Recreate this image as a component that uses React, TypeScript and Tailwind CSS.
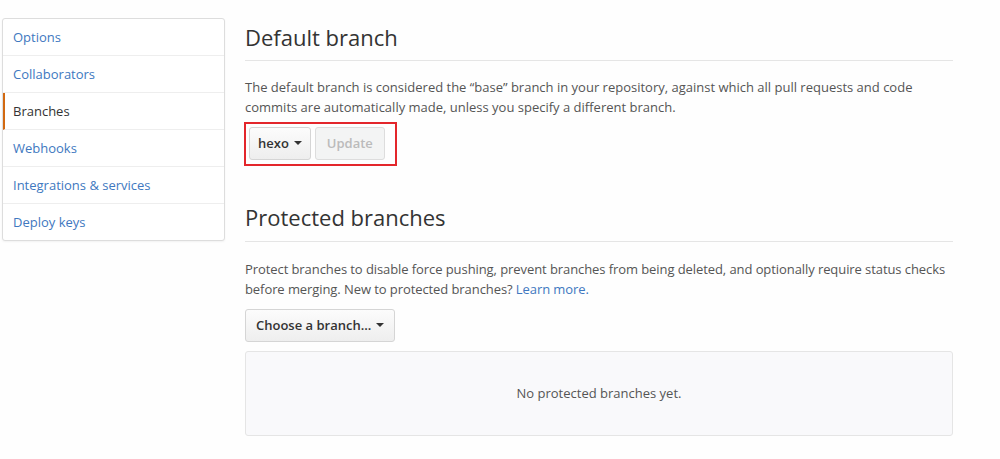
import React from 'react';

const menu = ['Options', 'Collaborators', 'Branches', 'Webhooks', 'Integrations & services', 'Deploy keys'];

function Caret() {
  return <span className="inline-block ml-[5px] align-middle border-x-[4px] border-x-transparent border-t-[4px] border-t-[#333] relative top-[-1px]" />;
}

export default function App() {
  return (
    <div className="min-h-[459px] w-[1000px] bg-[#fefefe] text-[#333] flex items-start" style={{ fontFamily: '"Open Sans", "Noto Sans", Arial, sans-serif' }}>
      {/* sidebar */}
      <nav className="ml-[2px] mt-[18px] w-[223px] bg-white border border-[#ddd] rounded-[3px] shadow-[0_1px_2px_rgba(0,0,0,0.05)]">
        {menu.map((m, i) => (
          <div key={m}
            className={`px-[10px] py-[8px] text-[13px] leading-[20px] ${i < menu.length - 1 ? 'border-b border-[#eee]' : ''}
              ${m === 'Branches' ? 'text-[#333] border-l-2 border-l-[#d26911] pl-[8px]' : 'text-[#4078c0]'}`}>
            {m}
          </div>
        ))}
      </nav>

      {/* main */}
      <main className="ml-[20px] w-[708px] pt-[23px]">
        <h2 className="text-[22px] leading-[28px] font-normal pb-[9px] border-b border-[#e5e5e5]">Default branch</h2>
        <p className="mt-[16px] text-[13px] leading-[20px] text-[#555]">
          The default branch is considered the “base” branch in your repository, against which all pull requests and code commits are automatically made, unless you specify a different branch.
        </p>
        {/* highlighted area */}
        <div className="mt-[5px] ml-[-1px] inline-flex gap-[4px] border-2 border-[#e3262b] pl-[3px] pr-[10px] pt-[3px] pb-[4px]">
          <button className="h-[33px] px-[8px] text-[13px] font-semibold text-[#333] rounded-[3px] border border-[#d5d5d5] bg-gradient-to-b from-[#fcfcfc] to-[#eee]">
            hexo<Caret />
          </button>
          <button className="h-[33px] px-[11px] text-[13px] font-semibold text-[#bbb] rounded-[3px] border border-[#ddd] bg-[#f3f4f4]">
            Update
          </button>
        </div>

        <h2 className="mt-[37px] text-[22px] leading-[28px] font-normal pb-[10px] border-b border-[#e5e5e5]">Protected branches</h2>
        <p className="mt-[17px] text-[13px] leading-[20px] text-[#555] tracking-[-0.08px]">
          Protect branches to disable force pushing, prevent branches from being deleted, and optionally require status checks before merging. New to protected branches? <span className="text-[#4078c0]">Learn more.</span>
        </p>
        <button className="mt-[10px] h-[33px] px-[10px] text-[13px] font-semibold text-[#333] rounded-[3px] border border-[#d5d5d5] bg-gradient-to-b from-[#fcfcfc] to-[#eee]">
          Choose a branch...<Caret />
        </button>
        <div className="mt-[9px] h-[85px] flex items-center justify-center bg-[#f9f9fb] border border-[#e5e5e5] rounded-[3px] text-[13px] text-[#555]">
          No protected branches yet.
        </div>
      </main>
    </div>
  );
}
